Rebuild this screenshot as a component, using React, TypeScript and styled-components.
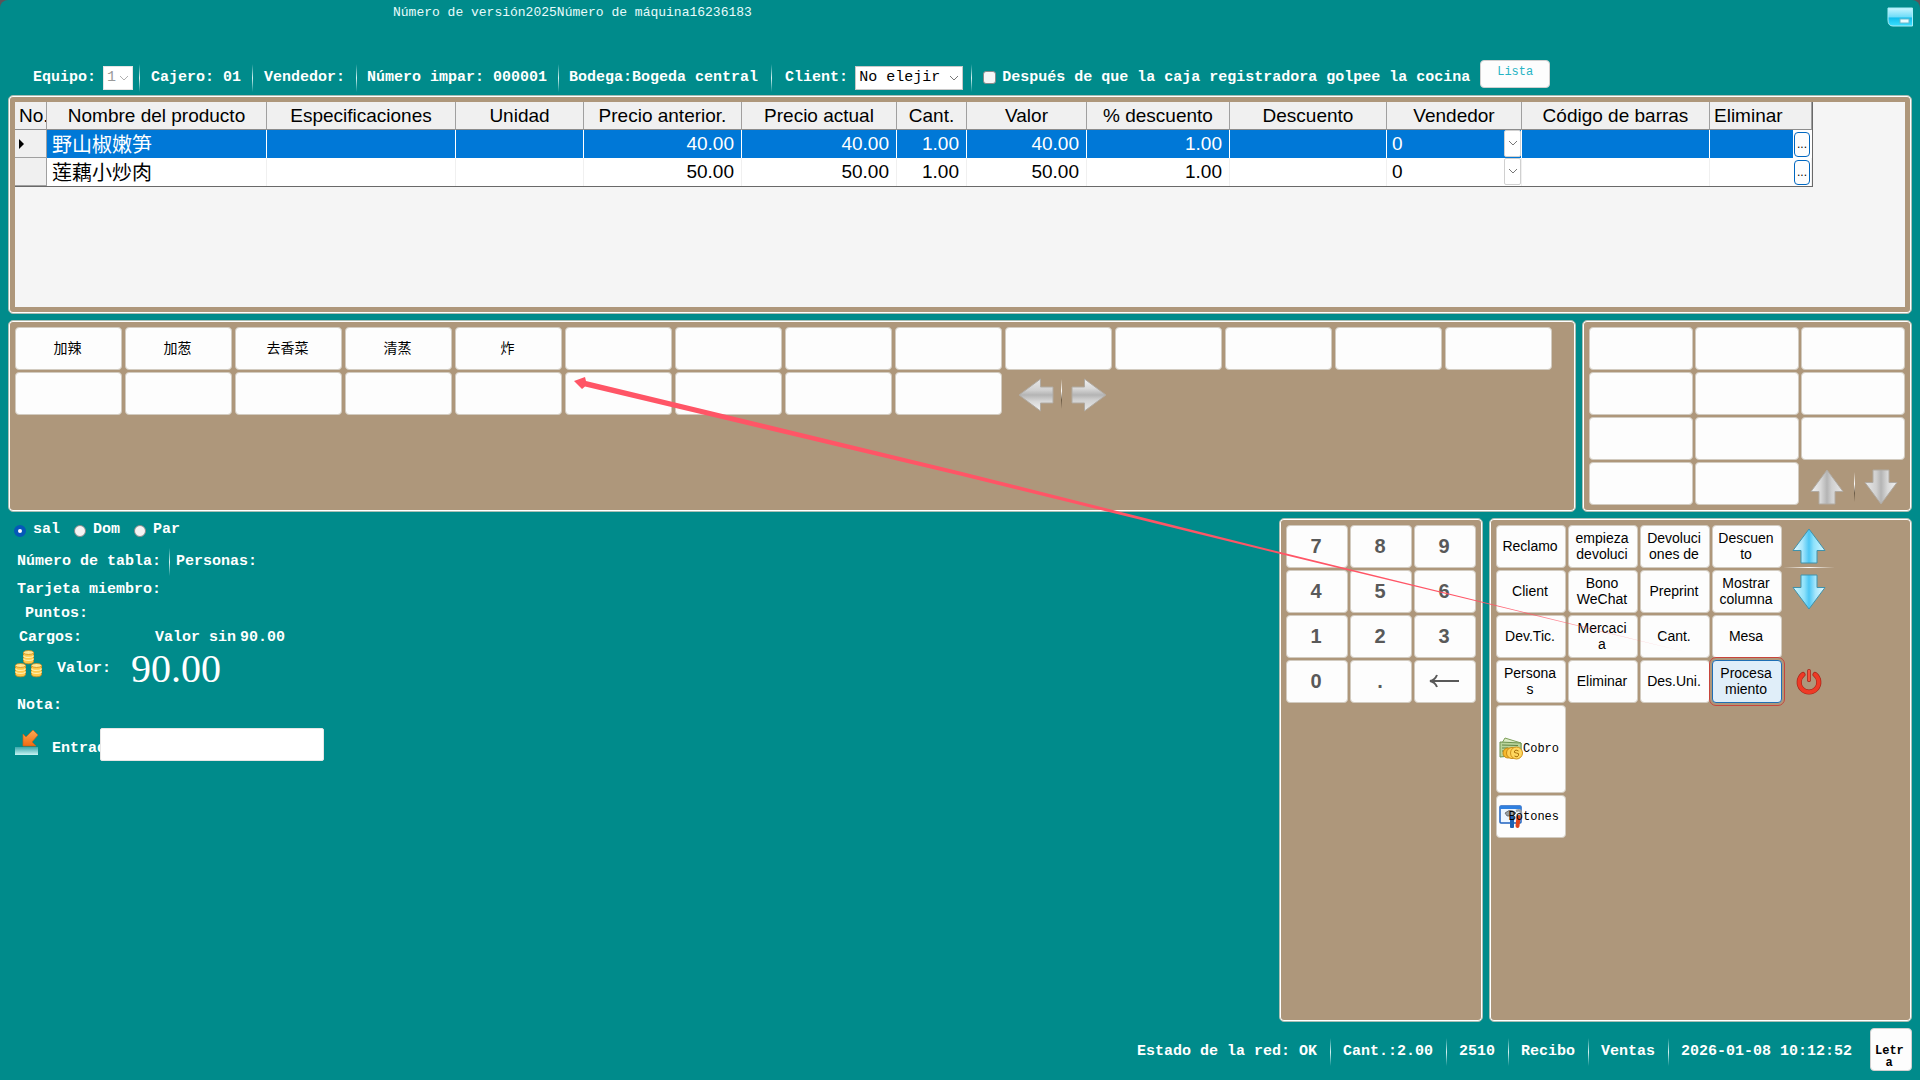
import React from "react";
import styled, { createGlobalStyle, css } from "styled-components";

const teal = "#008b8b";
const tan = "#ae977b";
const mono = '"Liberation Mono", "Noto Sans CJK SC", monospace';
const sans = '"Liberation Sans", "Noto Sans CJK SC", sans-serif';

const GlobalStyle = createGlobalStyle`
  *, *::before, *::after { box-sizing: border-box; }
  body { margin: 0; background: #5c5358; font-family: ${sans}; }
  button, input, select { font: inherit; color: inherit; margin: 0; }
`;

const Page = styled.div`
  position: relative;
  display: flex;
  flex-direction: column;
  min-height: 100vh;
  background: ${teal};
  border-radius: 8px 8px 0 0;
  overflow: hidden;
`;

const TitleBar = styled.header`
  display: flex;
  justify-content: space-between;
  align-items: flex-start;
  height: 58px;
  padding: 4px 7px 0 393px;
  color: #e8fbfb;
  font: 13px/18px ${mono};
`;

const TitleText = styled.span`
  white-space: nowrap;
`;

const IconButton = styled.button<{ $w?: number; $h?: number }>`
  display: flex;
  align-items: center;
  justify-content: center;
  width: ${(p) => p.$w ?? 26}px;
  height: ${(p) => p.$h ?? 26}px;
  padding: 0;
  border: 0;
  background: none;
  cursor: pointer;
`;

const boldLabel = css`
  color: #fff;
  font: bold 15px/20px ${mono};
  white-space: nowrap;
`;

const Toolbar = styled.div`
  display: flex;
  align-items: center;
  height: 37px;
  padding: 2px 0 0 33px;
  ${boldLabel}
`;

const Divider = styled.span<{ $before?: number; $after?: number }>`
  flex: none;
  width: 1px;
  height: 28px;
  margin: 0 ${(p) => p.$after ?? 11}px 0 ${(p) => p.$before ?? 11}px;
  background: linear-gradient(transparent, #d8f2f2 50%, transparent);
`;

const SelectBox = styled.span<{ $width: number; $muted?: boolean }>`
  position: relative;
  display: inline-flex;
  flex: none;
  width: ${(p) => p.$width}px;
  height: 24px;
  margin-left: 7px;
  select {
    width: 100%;
    padding: 0 3px;
    appearance: none;
    border: 1px solid ${(p) => (p.$muted ? "#e4e4e4" : "#c8c8c8")};
    border-radius: 0;
    background: #fff;
    color: ${(p) => (p.$muted ? "#9a9a9a" : "#000")};
    opacity: 1;
    font: 15px/20px ${mono};
  }
  svg {
    position: absolute;
    right: 4px;
    top: 9px;
    pointer-events: none;
  }
`;

const CheckLabel = styled.label`
  display: flex;
  align-items: center;
  gap: 6px;
  input {
    appearance: none;
    width: 13px;
    height: 13px;
    border: 1px solid #8a8a8a;
    border-radius: 3px;
    background: #f6f6f6;
  }
`;

const ListButton = styled.button`
  align-self: flex-start;
  width: 70px;
  height: 28px;
  margin: 0 0 0 10px;
  padding: 0 0 5px;
  border: 1px solid #d0d0d0;
  border-radius: 4px;
  background: #fdfdfd;
  color: #26b4c4;
  font: 12px/16px ${mono};
`;

const Panel = styled.section`
  border: 1px solid #a9bfb5;
  border-radius: 5px;
  box-shadow: inset 0 0 0 1px #fff;
  background: ${tan};
  padding: 6px;
`;

const TablePanel = styled(Panel)`
  height: 219px;
  margin: 0 8px 6px;
`;

const TableArea = styled.div`
  height: 100%;
  background: #f5f5f5;
  overflow: hidden;
`;

const Grid = styled.table`
  table-layout: fixed;
  width: 1797px;
  border-collapse: separate;
  border-spacing: 0;
  border-right: 1px solid #696969;
  border-bottom: 1px solid #696969;
  font: 19px/24px ${sans};
  th, td {
    height: 28px;
    padding: 0 7px;
    overflow: hidden;
    white-space: nowrap;
    font-weight: normal;
  }
  thead th {
    padding: 0 4px;
    background: #f0f0f0;
    border-right: 1px solid #a0a0a0;
    border-bottom: 1px solid #8c8c8c;
  }
`;

const HeadCell = styled.th<{ $left?: boolean }>`
  text-align: ${(p) => (p.$left ? "left" : "center")};
`;

const BodyRow = styled.tr<{ $selected?: boolean }>`
  td {
    background: ${(p) => (p.$selected ? "#0078d7" : "#fff")};
    color: ${(p) => (p.$selected ? "#fff" : "#000")};
    border-right: 1px solid ${(p) => (p.$selected ? "#fff" : "#f0f0f0")};
  }
  th {
    padding: 0;
    background: #f0f0f0;
    border-right: 1px solid #a0a0a0;
    border-bottom: 1px solid #a0a0a0;
    text-align: left;
  }
`;

const NameCell = styled.td`
  && { padding: 0 5px; }
  font: 300 20px/24px "Noto Sans CJK SC", ${sans};
`;

const NumCell = styled.td`
  text-align: right;
`;

const SelectCell = styled.td`
  && { padding: 0; }
`;

const CellSelect = styled.span`
  position: relative;
  display: flex;
  height: 28px;
  select {
    width: 100%;
    padding: 0 5px;
    border: 0;
    appearance: none;
    background: none;
  }
  span {
    position: absolute;
    right: 0;
    top: 0;
    display: flex;
    align-items: center;
    justify-content: center;
    width: 17px;
    height: 27px;
    border: 1px solid #d0d0d0;
    border-radius: 2px;
    background: #fff;
    pointer-events: none;
  }
`;

const ActionCell = styled.td<{ $selected?: boolean }>`
  && {
    padding: 0 1px 0 0;
    background: ${(p) =>
      p.$selected ? "linear-gradient(to left, #fff 18px, #0078d7 18px)" : "#fff"};
  }
`;

const MoreButton = styled.button`
  display: block;
  width: 16px;
  height: 25px;
  margin-left: auto;
  padding: 0;
  border: 1px solid #0067c0;
  border-radius: 4px;
  background: #fdfdfd;
  color: #000;
  font: 12px/20px ${sans};
`;

const MiddleRow = styled.div`
  display: grid;
  grid-template-columns: 1fr 330px;
  gap: 6px;
  height: 192px;
  margin: 0 8px 6px;
`;

const ModifierPanel = styled(Panel)`
  display: flex;
  flex-wrap: wrap;
  align-content: flex-start;
  gap: 2px 3px;
`;

const CategoryPanel = styled(Panel)`
  display: grid;
  grid-template-columns: repeat(3, 1fr);
  grid-auto-rows: 43px;
  gap: 2px;
`;

const Key = styled.button<{ $width?: string; $tall?: boolean; $active?: boolean }>`
  position: relative;
  width: ${(p) => p.$width ?? "100%"};
  height: ${(p) => (p.$tall ? 88 : 43)}px;
  padding: 0 2px 2px 0;
  border: 1px solid #d2cbc0;
  border-radius: 4px;
  background: #fdfdfd;
  color: #000;
  font: 14px/16px ${sans};
  white-space: pre-line;
  cursor: pointer;
  ${(p) =>
    p.$active &&
    css`
      border-color: #1f6fb5;
      background: #e0eef9;
      outline: 1px solid #c8453c;
      outline-offset: 2px;
      z-index: 1;
    `}
`;

const DigitKey = styled(Key)`
  color: #595959;
  font: bold 20px/24px ${sans};
`;

const PagerPair = styled.div<{ $inset: string }>`
  display: flex;
  align-items: center;
  height: 43px;
  padding: ${(p) => p.$inset};
  justify-content: space-between;
`;

const PagerLine = styled.span`
  width: 1px;
  height: 30px;
  background: linear-gradient(transparent, #fff 40%, #6b5a44 70%, transparent);
`;

const LowerRow = styled.div`
  flex: 1;
  display: grid;
  grid-template-columns: 1fr 204px 423px;
  gap: 6px;
  margin: 0 8px;
`;

const OrderInfo = styled.form`
  display: flex;
  flex-direction: column;
  padding: 2px 0 0 5px;
  ${boldLabel}
`;

const InfoRow = styled.div<{ $h: number; $indent?: number }>`
  display: flex;
  align-items: center;
  height: ${(p) => p.$h}px;
  padding-left: ${(p) => p.$indent ?? 4}px;
`;

const Radios = styled.fieldset`
  display: flex;
  gap: 18px;
  height: 26px;
  margin: 0;
  padding: 0 0 0 1px;
  border: 0;
  label {
    display: flex;
    align-items: flex-start;
    width: 42px;
    gap: 7px;
  }
  input {
    flex: none;
    appearance: none;
    width: 12px;
    height: 12px;
    margin-top: 5px;
    border: 1px solid #8a8a8a;
    border-radius: 50%;
    background: #f4f4f4;
  }
  input:checked {
    border: 4px solid #0558b8;
    background: #fff;
  }
`;

const NetLabel = styled.span`
  margin: 0 4px 0 73px;
`;

const IconSlot = styled.span<{ $w: number }>`
  display: flex;
  flex: none;
  align-self: flex-start;
  width: ${(p) => p.$w}px;
`;

const Total = styled.output`
  margin-left: 20px;
  font: 40px/40px "Liberation Serif", serif;
`;

const EntryLabel = styled.label`
  width: 48px;
  padding-top: 10px;
`;

const EntryInput = styled.input`
  position: relative;
  width: 224px;
  height: 33px;
  padding: 0 6px;
  border: 1px solid #e6e6e6;
  border-radius: 2px;
  background: #fff;
  color: #000;
`;

const Keypad = styled(Panel)`
  display: grid;
  grid-template-columns: repeat(3, 1fr);
  grid-auto-rows: 43px;
  align-content: start;
  gap: 2px;
`;

const FunctionPanel = styled(Panel)`
  display: grid;
  grid-template-columns: repeat(4, 70px) 50px;
  grid-template-rows: repeat(4, 43px) 88px 43px;
  gap: 2px;
`;

const NavCell = styled.div<{ $row: number; $line?: boolean }>`
  grid-column: 5;
  grid-row: ${(p) => p.$row};
  display: flex;
  flex-direction: column;
  align-items: center;
  justify-content: center;
  border-bottom: ${(p) => (p.$line ? "1px solid" : "0")};
  border-image: linear-gradient(to right, transparent, #fff, transparent) 1;
`;

const IconKey = styled(Key)<{ $row: number }>`
  grid-column: 1;
  grid-row: ${(p) => p.$row};
  padding: 0 6px 0 0;
  text-align: right;
  font: 12px/16px ${mono};
  svg {
    position: absolute;
    left: 2px;
    top: calc(50% - 12px);
  }
  span { position: relative; }
`;

const StatusBar = styled.footer`
  display: flex;
  align-items: center;
  justify-content: flex-end;
  height: 58px;
  padding: 2px 8px 0 0;
  ${boldLabel}
`;

const KeyboardButton = styled.button`
  align-self: flex-start;
  width: 42px;
  height: 43px;
  margin: 4px 0 0 18px;
  padding: 14px 8px 0 4px;
  border: 1px solid #d0d0d0;
  border-radius: 4px;
  background: #fdfdfd;
  color: #000;
  font: bold 12px/12px ${mono};
  white-space: pre-line;
`;

const Annotation = styled.svg`
  position: absolute;
  left: 0;
  top: 0;
  pointer-events: none;
  z-index: 2;
`;

const Chevron = ({ color = "#777" }: { color?: string }) => (
  <svg width="10" height="7" viewBox="0 0 10 7" fill="none" stroke={color} aria-hidden="true">
    <path d="M1 1l4 4 4-4" />
  </svg>
);

const angles = { up: 0, right: 90, down: 180, left: 270 };

const Arrow = ({ dir, blue }: { dir: keyof typeof angles; blue?: boolean }) => {
  const id = `arrow-${dir}-${blue ? "b" : "g"}`;
  return (
    <svg width="36" height="36" viewBox="0 0 36 36" aria-hidden="true">
      <defs>
        <linearGradient id={id}>
          <stop offset="0" stopColor={blue ? "#e8fbff" : "#f2f2f2"} />
          <stop offset="0.3" stopColor={blue ? "#a5e6fc" : "#d8d8d8"} />
          <stop offset="0.5" stopColor={blue ? "#4cc6f4" : "#b4b4b4"} />
          <stop offset="0.65" stopColor={blue ? "#8fe2fb" : "#d0d0d0"} />
          <stop offset="1" stopColor={blue ? "#d4f7ff" : "#e8e8e8"} />
        </linearGradient>
      </defs>
      <path
        transform={`rotate(${angles[dir]} 18 18)`}
        d="M18 1L34 22.500H26V35H10V22.500H2z"
        fill={`url(#${id})`}
        stroke={blue ? "#3f93ad" : "#b0aaa2"}
        strokeWidth="1"
      />
    </svg>
  );
};

const MinimizeIcon = () => (
  <svg width="26" height="20" viewBox="0 0 26 20" aria-hidden="true">
    <defs>
      <linearGradient id="min" x2="0" y2="1">
        <stop offset="0" stopColor="#c9f6ff" />
        <stop offset="0.5" stopColor="#6edcf8" />
        <stop offset="0.55" stopColor="#12bdec" />
        <stop offset="1" stopColor="#3be0ff" />
      </linearGradient>
    </defs>
    <path d="M1 1H25.500V19H6Q1 19 1 13z" fill="url(#min)" stroke="#a6edf8" />
    <rect x="13" y="12" width="9" height="4" fill="#e9fbff" stroke="#68b9cc" />
  </svg>
);

const CoinStack = ({ x, y }: { x: number; y: number }) => (
  <g transform={`translate(${x} ${y})`} stroke="#d28c1c" strokeWidth="0.800">
    <path d="M0.500 2.500v9c0 3 10 3 10 0v-9z" fill="#ffc94a" />
    <path d="M0.500 5.500c0 2.500 10 2.500 10 0M0.500 8.500c0 2.500 10 2.500 10 0" fill="none" stroke="#fff0b0" strokeWidth="1.200" />
    <ellipse cx="5.500" cy="2.500" rx="5" ry="2" fill="#ffe895" />
  </g>
);

const CoinsIcon = () => (
  <svg width="28" height="28" viewBox="0 0 28 28" aria-hidden="true">
    <CoinStack x={8} y={0} />
    <CoinStack x={0} y={13} />
    <CoinStack x={16} y={13} />
  </svg>
);

const EntryIcon = () => (
  <svg width="24" height="32" viewBox="0 -6 24 32" aria-hidden="true">
    <defs>
      <linearGradient id="tray" x2="0" y2="1">
        <stop offset="0" stopColor="#3aa7ab" />
        <stop offset="1" stopColor="#c8f4f4" />
      </linearGradient>
      <linearGradient id="orange" x2="0" y2="1">
        <stop offset="0" stopColor="#ffab55" />
        <stop offset="1" stopColor="#f26a10" />
      </linearGradient>
    </defs>
    <rect x="0" y="17" width="23" height="8" fill="url(#tray)" />
    <path d="M18 0l5 5-6 7 4 4H8V4l3 3z" fill="url(#orange)" stroke="#cf6318" strokeWidth="0.700" />
  </svg>
);

const PowerIcon = () => (
  <svg width="28" height="28" viewBox="0 0 30 30" fill="none" strokeLinecap="round" aria-hidden="true">
    <path d="M8.500 7a10.500 10.500 0 1 0 13 0" stroke="#a5261a" strokeWidth="5.500" />
    <path d="M8.500 7a10.500 10.500 0 1 0 13 0" stroke="#ee3a26" strokeWidth="4" />
    <path d="M15 3v10" stroke="#a5261a" strokeWidth="4" />
    <path d="M15 3v10" stroke="#f4513a" strokeWidth="2.500" />
  </svg>
);

const CashIcon = () => (
  <svg width="24" height="24" viewBox="0 0 24 24" aria-hidden="true">
    <path d="M3 6l3-5 16 5v10H4z" fill="#dcebc6" stroke="#7da05a" />
    <path d="M1 5l21 1v12L1 20z" fill="#b9d39a" stroke="#6e9350" />
    <path d="M3 8l16 .5M3 11h6M3 14h4" stroke="#5f8546" />
    <circle cx="9" cy="16" r="5" fill="#f6b82e" stroke="#c98a12" />
    <circle cx="13" cy="16" r="5.500" fill="#ffd055" stroke="#c98a12" />
    <circle cx="17.500" cy="16" r="6" fill="#ffd75e" stroke="#d0921a" />
    <path d="M19.500 14q-3-2-4 0t2 2 2 2.500-4 .5" fill="none" stroke="#a8700a" />
  </svg>
);

const ToolsIcon = () => (
  <svg width="24" height="24" viewBox="0 0 24 24" aria-hidden="true">
    <rect x="1" y="1" width="21" height="17" rx="1" fill="#eef6ff" stroke="#1f62c0" strokeWidth="1.500" />
    <rect x="1" y="1" width="21" height="3" fill="#2f80e0" />
    <path d="M6 8q4-4 8-2l3 2-3 3H8z" fill="#9aa0a6" stroke="#555" strokeWidth="0.700" />
    <path d="M17 6q5-2 5 2t-3 4" fill="none" stroke="#9aa0a6" strokeWidth="2.500" />
    <rect x="11" y="11" width="4" height="12" rx="1" fill="#1d63b4" />
    <path d="M19.500 12l-1 9" stroke="#e0441c" strokeWidth="4" strokeLinecap="round" />
  </svg>
);

const BackspaceIcon = () => (
  <svg width="30" height="14" viewBox="0 0 30 14" fill="none" stroke="#595959" aria-hidden="true">
    <path d="M1 7h29" strokeWidth="2" />
    <path d="M8 1Q6 6 1 7q5 1 7 6" strokeWidth="2" />
  </svg>
);

const columns: [string, number][] = [
  ["No.", 32],
  ["Nombre del producto", 220],
  ["Especificaciones", 189],
  ["Unidad", 128],
  ["Precio anterior.", 158],
  ["Precio actual", 155],
  ["Cant.", 70],
  ["Valor", 120],
  ["% descuento", 143],
  ["Descuento", 157],
  ["Vendedor", 135],
  ["Código de barras", 188],
  ["Eliminar", 102],
];

const products = [
  { name: "野山椒嫩笋", price: "40.00" },
  { name: "莲藕小炒肉", price: "50.00" },
];

const modifiers = ["加辣", "加葱", "去香菜", "清蒸", "炸"];
const digits = ["7", "8", "9", "4", "5", "6", "1", "2", "3", "0", "."];

const functions = [
  "Reclamo", "empieza\ndevoluci", "Devoluci\nones de", "Descuen\nto",
  "Client", "Bono\nWeChat", "Preprint", "Mostrar\ncolumna",
  "Dev.Tic.", "Mercaci\na", "Cant.", "Mesa",
  "Persona\ns", "Eliminar", "Des.Uni.", "Procesa\nmiento",
];

const statusItems = [
  "Estado de la red: OK",
  "Cant.:2.00",
  "2510",
  "Recibo",
  "Ventas",
  "2026-01-08 10:12:52",
];

export default function App() {
  return (
    <Page>
      <GlobalStyle />
      <TitleBar>
        <TitleText>Número de versión2025Número de máquina16236183</TitleText>
        <IconButton type="button" aria-label="Minimizar">
          <MinimizeIcon />
        </IconButton>
      </TitleBar>

      <Toolbar>
        <label htmlFor="equipo">Equipo:</label>
        <SelectBox $width={30} $muted>
          <select id="equipo" disabled>
            <option>1</option>
          </select>
          <Chevron color="#b0b0b0" />
        </SelectBox>
        <Divider $before={6} />
        <span>Cajero: 01</span>
        <Divider />
        <span>Vendedor:</span>
        <Divider $after={10} />
        <span>Número impar: 000001</span>
        <Divider $after={10} />
        <span>Bodega:Bogeda central</span>
        <Divider $before={13} $after={13} />
        <label htmlFor="client">Client:</label>
        <SelectBox $width={108}>
          <select id="client">
            <option>No elejir</option>
          </select>
          <Chevron />
        </SelectBox>
        <Divider $before={8} />
        <CheckLabel>
          <input type="checkbox" />
          Después de que la caja registradora golpee la cocina
        </CheckLabel>
        <ListButton type="button">Lista</ListButton>
      </Toolbar>

      <TablePanel>
        <TableArea>
          <Grid>
            <colgroup>
              {columns.map(([title, width]) => (
                <col key={title} style={{ width }} />
              ))}
            </colgroup>
            <thead>
              <tr>
                {columns.map(([title]) => (
                  <HeadCell key={title} scope="col" $left={title === "No." || title === "Eliminar"}>
                    {title}
                  </HeadCell>
                ))}
              </tr>
            </thead>
            <tbody>
              {products.map((item, i) => (
                <BodyRow key={item.name} $selected={i === 0}>
                  <th scope="row">
                    {i === 0 && (
                      <svg width="12" height="12" viewBox="0 0 12 12" aria-label="Fila actual">
                        <path d="M4 1l5 5-5 5z" />
                      </svg>
                    )}
                  </th>
                  <NameCell>{item.name}</NameCell>
                  <td />
                  <td />
                  <NumCell>{item.price}</NumCell>
                  <NumCell>{item.price}</NumCell>
                  <NumCell>1.00</NumCell>
                  <NumCell>{item.price}</NumCell>
                  <NumCell>1.00</NumCell>
                  <td />
                  <SelectCell>
                    <CellSelect>
                      <select aria-label={`Vendedor de ${item.name}`}>
                        <option>0</option>
                      </select>
                      <span>
                        <Chevron />
                      </span>
                    </CellSelect>
                  </SelectCell>
                  <td />
                  <ActionCell $selected={i === 0}>
                    <MoreButton type="button">...</MoreButton>
                  </ActionCell>
                </BodyRow>
              ))}
            </tbody>
          </Grid>
        </TableArea>
      </TablePanel>

      <MiddleRow>
        <ModifierPanel>
          {Array.from({ length: 23 }, (_, i) => (
            <Key key={i} type="button" $width="107px">
              {modifiers[i]}
            </Key>
          ))}
          <PagerPair $inset="3px 0 0 13px">
            <IconButton type="button" aria-label="Anterior" $w={36} $h={36}>
              <Arrow dir="left" />
            </IconButton>
          </PagerPair>
          <PagerPair $inset="0 6px 0 4px">
            <PagerLine />
          </PagerPair>
          <PagerPair $inset="3px 0 0">
            <IconButton type="button" aria-label="Siguiente" $w={36} $h={36}>
              <Arrow dir="right" />
            </IconButton>
          </PagerPair>
        </ModifierPanel>
        <CategoryPanel>
          {Array.from({ length: 11 }, (_, i) => (
            <Key key={i} type="button" />
          ))}
          <PagerPair $inset="6px 6px 0 8px">
            <IconButton type="button" aria-label="Subir" $w={36} $h={36}>
              <Arrow dir="up" />
            </IconButton>
            <PagerLine />
            <IconButton type="button" aria-label="Bajar" $w={36} $h={36}>
              <Arrow dir="down" />
            </IconButton>
          </PagerPair>
        </CategoryPanel>
      </MiddleRow>

      <LowerRow>
        <OrderInfo onSubmit={(e) => e.preventDefault()}>
          <Radios>
            {["sal", "Dom", "Par"].map((name, i) => (
              <label key={name}>
                <input type="radio" name="mode" defaultChecked={i === 0} />
                {name}
              </label>
            ))}
          </Radios>
          <InfoRow $h={32}>
            Número de tabla:
            <Divider $before={8} $after={6} />
            Personas:
          </InfoRow>
          <InfoRow $h={24}>Tarjeta miembro:</InfoRow>
          <InfoRow $h={24} $indent={12}>Puntos:</InfoRow>
          <InfoRow $h={24} $indent={6}>
            Cargos:
            <NetLabel>Valor sin</NetLabel>
            <span>90.00</span>
          </InfoRow>
          <InfoRow $h={38} $indent={2}>
            <IconSlot $w={42}>
              <CoinsIcon />
            </IconSlot>
            Valor:
            <Total>90.00</Total>
          </InfoRow>
          <InfoRow $h={36}>Nota:</InfoRow>
          <InfoRow $h={40} $indent={2}>
            <IconSlot $w={37}>
              <EntryIcon />
            </IconSlot>
            <EntryLabel htmlFor="entry">Entrada:</EntryLabel>
            <EntryInput id="entry" type="text" />
          </InfoRow>
        </OrderInfo>

        <Keypad>
          {digits.map((d) => (
            <DigitKey key={d} type="button">
              {d}
            </DigitKey>
          ))}
          <DigitKey type="button" aria-label="Borrar">
            <BackspaceIcon />
          </DigitKey>
        </Keypad>

        <FunctionPanel>
          {functions.map((label, i) => (
            <Key
              key={label}
              type="button"
              $active={i === 15}
              style={{ gridColumn: (i % 4) + 1, gridRow: Math.floor(i / 4) + 1 }}
            >
              {label}
            </Key>
          ))}
          <NavCell $row={1} $line>
            <IconButton type="button" aria-label="Página anterior" $w={36} $h={36}>
              <Arrow dir="up" blue />
            </IconButton>
          </NavCell>
          <NavCell $row={2}>
            <IconButton type="button" aria-label="Página siguiente" $w={36} $h={36}>
              <Arrow dir="down" blue />
            </IconButton>
          </NavCell>
          <NavCell $row={4}>
            <IconButton type="button" aria-label="Salir" $w={36} $h={36}>
              <PowerIcon />
            </IconButton>
          </NavCell>
          <IconKey type="button" $row={5} $tall>
            <CashIcon />
            <span>Cobro</span>
          </IconKey>
          <IconKey type="button" $row={6}>
            <ToolsIcon />
            <span>Botones</span>
          </IconKey>
        </FunctionPanel>
      </LowerRow>

      <StatusBar>
        {statusItems.map((text, i) => (
          <React.Fragment key={text}>
            {i > 0 && <Divider $before={13} $after={12} />}
            <span>{text}</span>
          </React.Fragment>
        ))}
        <KeyboardButton type="button">{"Letr\na"}</KeyboardButton>
      </StatusBar>

      <Annotation width="1700" height="660" viewBox="0 0 1700 660" aria-hidden="true">
        <defs>
          <linearGradient id="trail">
            <stop offset="0" stopColor="#ff5566" />
            <stop offset="0.8" stopColor="#ff5566" />
            <stop offset="1" stopColor="#ff5566" stopOpacity="0.150" />
          </linearGradient>
        </defs>
        <path
          d="M574 381L585 377L586 381L960 471.500L1270 549.500L1690 653L1270 551.500L960 475.500L585 386.500L582 389z"
          fill="url(#trail)"
        />
      </Annotation>
    </Page>
  );
}
